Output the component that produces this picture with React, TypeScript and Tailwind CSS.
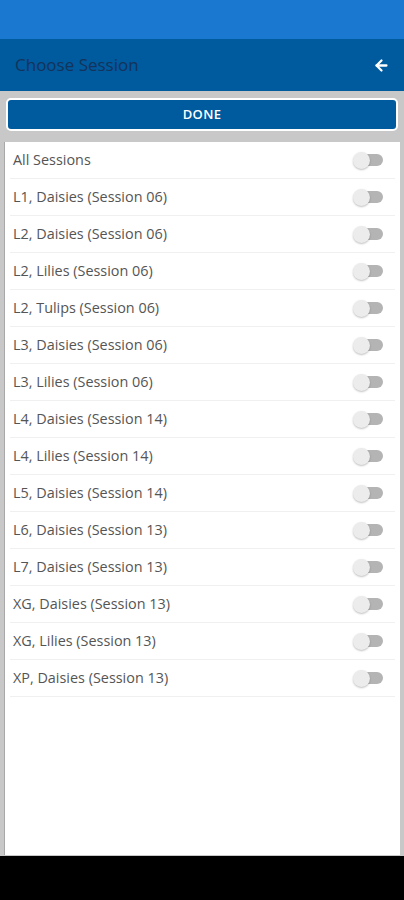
import { ArrowLeft } from 'lucide-react'

const sessions = [
  'All Sessions',
  'L1, Daisies (Session 06)',
  'L2, Daisies (Session 06)',
  'L2, Lilies (Session 06)',
  'L2, Tulips (Session 06)',
  'L3, Daisies (Session 06)',
  'L3, Lilies (Session 06)',
  'L4, Daisies (Session 14)',
  'L4, Lilies (Session 14)',
  'L5, Daisies (Session 14)',
  'L6, Daisies (Session 13)',
  'L7, Daisies (Session 13)',
  'XG, Daisies (Session 13)',
  'XG, Lilies (Session 13)',
  'XP, Daisies (Session 13)',
]

function Toggle() {
  return (
    <div className="relative w-[32px] h-[18px] flex items-center">
      <div className="absolute left-[6px] w-[24px] h-[12px] rounded-full bg-[#b4b4b4]" />
      <div className="absolute left-0 w-[17px] h-[17px] rounded-full bg-[#ececec] shadow-[0_1px_2px_rgba(0,0,0,0.25)]" />
    </div>
  )
}

export default function App() {
  return (
    <div className="w-[404px] h-[900px] flex flex-col bg-[#c8c8c8]" style={{ fontFamily: '"Open Sans", "Noto Sans", sans-serif' }}>
      {/* Status bar */}
      <div className="h-[39px] bg-[#1a78d0] shrink-0" />

      {/* Header */}
      <div className="h-[52px] bg-[#005a9e] shrink-0 flex items-center justify-between pl-[15px] pr-[14px]">
        <span className="text-[17px] text-[#14335a]">Choose Session</span>
        <ArrowLeft size={17} strokeWidth={3.2} className="text-white" />
      </div>

      {/* Done button */}
      <div className="px-[6px] pt-[7px] pb-[11px] shrink-0">
        <button className="w-full h-[33px] rounded-[5px] border-2 border-white bg-[#005a9e] text-white text-[13px] font-semibold tracking-wide">
          DONE
        </button>
      </div>

      {/* List */}
      <div className="flex-1 mx-[4px] mb-[1px] bg-white border-l border-[#a8a8a8]">
        {sessions.map((s) => (
          <div key={s} className="mx-[5px] h-[37px] flex items-center justify-between border-b border-[#f0f0f0] pl-[3px] pr-[10px]">
            <span className="text-[14.4px] text-[#555555]">{s}</span>
            <Toggle />
          </div>
        ))}
      </div>

      {/* Nav bar */}
      <div className="h-[44px] bg-black shrink-0" />
    </div>
  )
}
